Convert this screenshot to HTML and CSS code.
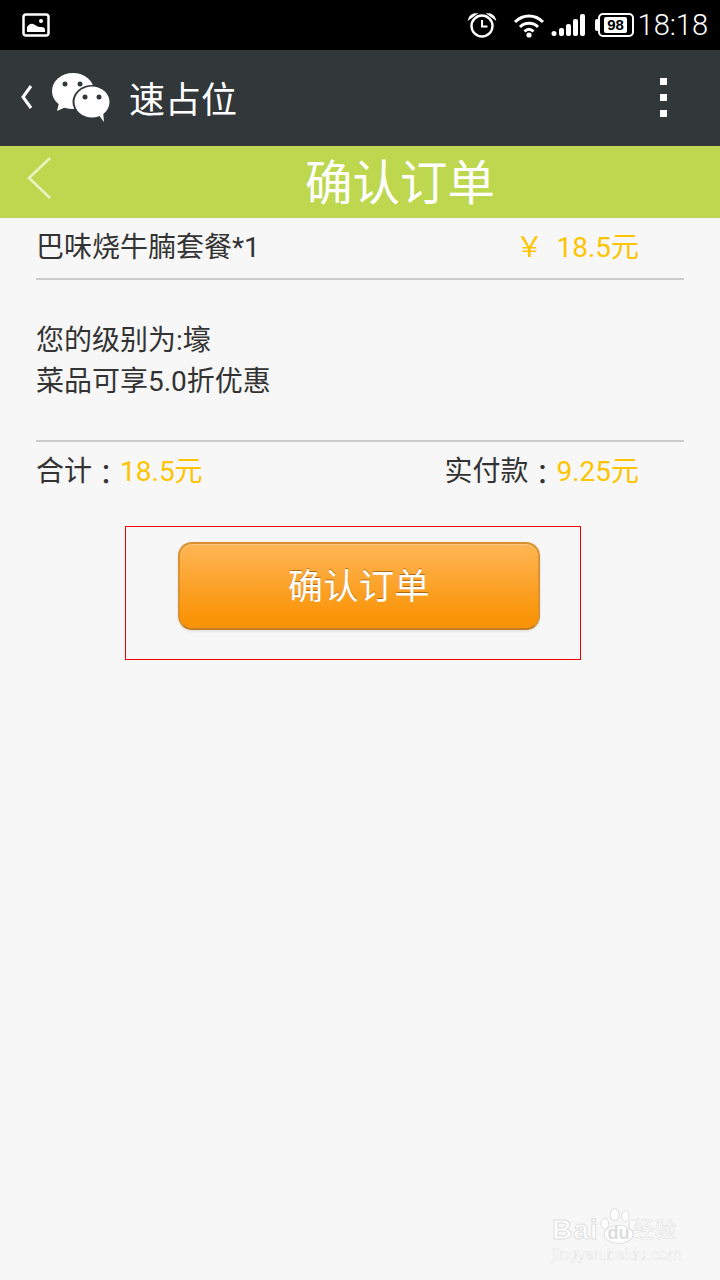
FILE: index.html
```html
<!DOCTYPE html>
<html lang="zh-CN">
<head>
    <meta charset="UTF-8">
    <meta name="viewport" content="width=device-width, initial-scale=1.0">
    <title>确认订单</title>
    <link rel="stylesheet" href="styles.css">
</head>
<body>
    <div class="status-bar">
        <svg class="icon-pic" width="28" height="24" viewBox="0 0 28 24">
            <rect x="1.500" y="1.500" width="25" height="21" rx="2.500" fill="none" stroke="#fff" stroke-width="2.500"/>
            <path d="M5 19v-5c3-4 5-4 8-2 2 1 3 2 5 2 2 0 4 0 5 2v3z" fill="#fff"/>
            <circle cx="19" cy="8" r="2" fill="#fff"/>
        </svg>
        <div class="status-right">
            <svg class="icon-alarm" width="30" height="26" viewBox="0 0 30 26">
                <circle cx="15" cy="14" r="10.500" fill="none" stroke="#fff" stroke-width="2.400"/>
                <path d="M15 8v6.500h5.500" fill="none" stroke="#fff" stroke-width="2"/>
                <path d="M2 7c1-3 4-5 7-5zM28 7c-1-3-4-5-7-5z" fill="#fff" stroke="#fff" stroke-width="1.500"/>
            </svg>
            <svg class="icon-wifi" width="32" height="25" viewBox="0 0 32 25">
                <path d="M2 9c8-8 20-8 28 0M7 14c5-5 13-5 18 0M11.500 18.500c3-3 6-3 9 0" fill="none" stroke="#fff" stroke-width="3"/>
                <circle cx="16" cy="22" r="2.600" fill="#fff"/>
            </svg>
            <svg class="icon-signal" width="34" height="24" viewBox="0 0 34 24">
                <circle cx="3" cy="20.500" r="2.500" fill="#fff"/>
                <rect x="8" y="15" width="5" height="8" rx="2" fill="#fff"/>
                <rect x="15" y="11" width="5" height="12" rx="2" fill="#fff"/>
                <rect x="22" y="6" width="5" height="17" rx="2" fill="#fff"/>
                <rect x="29" y="1" width="5" height="22" rx="2" fill="#fff"/>
            </svg>
            <div class="battery"><span>98</span></div>
            <span class="clock">18:18</span>
        </div>
    </div>

    <div class="wx-bar">
        <svg class="wx-back" width="14" height="26" viewBox="0 0 14 26">
            <path d="M11 2 3 13l8 11" fill="none" stroke="#fff" stroke-width="3"/>
        </svg>
        <svg class="wx-logo" width="60" height="52" viewBox="0 0 60 52">
            <ellipse cx="22" cy="20" rx="21" ry="18" fill="#fff"/>
            <path d="M8 32 6 40l11-5z" fill="#fff"/>
            <circle cx="14" cy="13" r="2.500" fill="#32373a"/>
            <circle cx="29" cy="13" r="2.500" fill="#32373a"/>
            <ellipse cx="41" cy="31" rx="19.500" ry="17" fill="#32373a"/>
            <ellipse cx="41" cy="31" rx="17.500" ry="15.500" fill="#fff"/>
            <path d="M47 43l6 8-1-11z" fill="#fff"/>
            <circle cx="34" cy="26" r="2.500" fill="#32373a"/>
            <circle cx="48" cy="26" r="2.500" fill="#32373a"/>
        </svg>
        <span class="wx-title">速占位</span>
        <div class="wx-menu"><i></i><i></i><i></i></div>
    </div>

    <div class="page-head">
        <svg class="head-back" width="26" height="44" viewBox="0 0 26 44">
            <path d="M24 2 3 22l21 20" fill="none" stroke="#e9f2c4" stroke-width="2.500"/>
        </svg>
        <h1>确认订单</h1>
    </div>

    <div class="order">
        <div class="row row-item">
            <span>巴味烧牛腩套餐*1</span>
            <span class="price"><span class="yen">￥</span>18.5元</span>
        </div>
        <div class="level">
            <p>您的级别为:壕</p>
            <p>菜品可享5.0折优惠</p>
        </div>
        <div class="row row-total">
            <span>合计<span class="colon" lang="zh-TW">：</span><em>18.5元</em></span>
            <span>实付款<span class="colon" lang="zh-TW">：</span><em>9.25元</em></span>
        </div>
    </div>

    <div class="confirm-box">
        <button type="button">确认订单</button>
    </div>

    <div class="watermark">
        <div class="wm-top">
            <span class="wm-bai">Bai</span>
            <svg width="58" height="50" viewBox="0 0 58 50">
                <g fill="#fff" stroke="#e0e0e0" stroke-width="1.500">
                    <ellipse cx="13" cy="22" rx="5" ry="7"/>
                    <ellipse cx="26" cy="10" rx="6" ry="8"/>
                    <ellipse cx="40" cy="12" rx="5" ry="7"/>
                    <ellipse cx="50" cy="24" rx="5" ry="7"/>
                    <ellipse cx="31" cy="36" rx="19" ry="12"/>
                </g>
                <text x="31" y="42" text-anchor="middle" class="wm-du">du</text>
            </svg>
            <span class="wm-jy">经验</span>
        </div>
        <div class="wm-url">jingyan.baidu.com</div>
    </div>
</body>
</html>
```

FILE: styles.css
```css
body {
    font-family: "Roboto", "Noto Sans CJK SC", sans-serif;
    margin: 0;
    width: 720px;
    height: 1280px;
    background-color: #f7f7f7;
    overflow: hidden;
    position: relative;
    color: #333333;
}

.status-bar {
    height: 50px;
    background-color: #000000;
    display: flex;
    align-items: center;
    justify-content: space-between;
    padding: 0 12px 0 22px;
    box-sizing: border-box;
}

.status-right {
    display: flex;
    align-items: center;
    gap: 6px;
}

.icon-wifi {
    margin-left: 10px;
}

.battery {
    width: 36px;
    height: 24px;
    margin-left: 7px;
    margin-right: -2px;
    border-radius: 5px;
    background-color: #000000;
    display: flex;
    align-items: center;
    justify-content: center;
    box-sizing: border-box;
    border: 2px solid #ffffff;
    position: relative;
}

.battery::before {
    content: "";
    position: absolute;
    left: -5px;
    top: 4px;
    width: 3px;
    height: 12px;
    border-radius: 2px 0 0 2px;
    background-color: #ffffff;
}

.battery span {
    font-family: "Liberation Sans", sans-serif;
    font-size: 15px;
    font-weight: bold;
    color: #000000;
    background-color: #ffffff;
    border-radius: 2px;
    padding: 0 3px;
    line-height: 16px;
}

.clock {
    font-size: 29px;
    font-weight: 300;
    color: #ffffff;
}

.wx-bar {
    height: 96px;
    background-color: #32373a;
    display: flex;
    align-items: center;
    padding: 0 0 2px 20px;
    box-sizing: border-box;
    position: relative;
}

.wx-logo {
    margin-left: 17px;
}

.wx-title {
    margin-left: 18px;
    font-size: 36px;
    color: #ffffff;
}

.wx-menu {
    margin-left: auto;
    margin-right: 53px;
    display: flex;
    flex-direction: column;
    gap: 9px;
}

.wx-menu i {
    display: block;
    width: 7px;
    height: 7px;
    background-color: #ffffff;
}

.page-head {
    height: 72px;
    background-color: #bdd84f;
    display: flex;
    align-items: center;
    justify-content: center;
    position: relative;
}

.head-back {
    position: absolute;
    left: 26px;
    top: 10px;
}

.page-head h1 {
    margin: 0 0 5px 80px;
    font-size: 47.5px;
    font-weight: normal;
    color: #ffffff;
}

.order {
    margin: 0 36px;
    font-size: 28px;
}

.row {
    display: flex;
    justify-content: space-between;
    padding: 0 45px 0 0;
}

.row-item {
    height: 62px;
    align-items: center;
    border-bottom: 2px solid #cccccc;
    padding-bottom: 6px;
    box-sizing: border-box;
}

.price, .row-total em {
    color: #fdc400;
    font-style: normal;
}

.yen {
    margin-right: 13px;
    margin-left: -3px;
}

.level {
    height: 162px;
    border-bottom: 2px solid #cccccc;
    padding: 40px 0 0 0;
    box-sizing: border-box;
}

.level p {
    margin: 0;
    line-height: 41px;
}

.row-total {
    height: 60px;
    align-items: center;
    padding-bottom: 6px;
    box-sizing: border-box;
}

/* TC glyph has the colon centred in its box, it just sits a bit high */
.colon {
    font-family: "Noto Sans CJK TC", sans-serif;
    vertical-align: -4px;
    line-height: 1;
}

.confirm-box {
    width: 456px;
    height: 134px;
    margin: 24px 0 0 125px;
    border: 1px solid #f00000;
    box-sizing: border-box;
    padding: 15px 0 0 52px;
}

.confirm-box button {
    display: block;
    width: 362px;
    height: 88px;
    padding: 0 0 6px;
    border: 2px solid #d9922f;
    border-bottom-color: #c47d20;
    border-radius: 14px;
    background: linear-gradient(#ffb655, #fa9408 88%);
    box-shadow: inset 0 1px 0 rgba(255, 255, 255, 0.25), 0 1px 3px rgba(0, 0, 0, 0.12);
    color: #ffffff;
    font-family: inherit;
    font-size: 35px;
    letter-spacing: 0.5px;
    text-shadow: 0 -1px 0 rgba(130, 70, 0, 0.6);
    cursor: pointer;
}

.watermark {
    position: absolute;
    left: 552px;
    top: 1202px;
    width: 130px;
    color: #ffffff;
}

.wm-top {
    display: flex;
    align-items: flex-end;
    height: 44px;
}

.wm-top svg {
    margin-left: -4px;
    margin-right: -6px;
    width: 44px;
    height: 40px;
}

.wm-bai {
    font-family: "Liberation Sans", sans-serif;
    font-size: 28px;
    font-weight: bold;
    line-height: 32px;
    letter-spacing: 1px;
    -webkit-text-stroke: 1px #dedede;
}

.wm-du {
    font-family: "Liberation Sans", sans-serif;
    font-size: 24px;
    font-weight: bold;
    fill: #dcdcdc;
}

.wm-jy {
    font-size: 22px;
    line-height: 32px;
    color: #ffffff;
    -webkit-text-stroke: 0.5px #dedede;
    white-space: nowrap;
}

.wm-url {
    font-size: 16px;
    color: #ffffff;
    -webkit-text-stroke: 0.4px #e0e0e0;
    line-height: 20px;
    margin-top: -1px;
    white-space: nowrap;
}
```
